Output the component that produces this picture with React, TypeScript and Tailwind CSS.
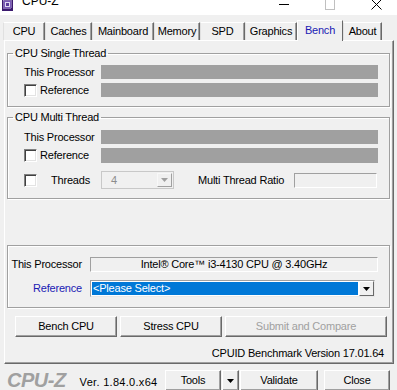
import React from "react";

function Btn({ className = "", children, disabled = false }: { className?: string; children?: React.ReactNode; disabled?: boolean }) {
  return (
    <div
      className={
        "flex items-center justify-center bg-[#f0f0f0] border border-t-white border-l-white border-b-[#696969] border-r-[#696969] shadow-[inset_-1px_-1px_0_#a0a0a0] " +
        (disabled ? "text-[#a0a0a0] " : "text-black ") +
        className
      }
    >
      {children}
    </div>
  );
}

function Check() {
  return (
    <div className="w-[13px] h-[13px] bg-white border border-t-[#808080] border-l-[#808080] border-b-white border-r-white shadow-[inset_1px_1px_0_#404040,inset_-1px_-1px_0_#e3e3e3]" />
  );
}

function Tri({ color = "#000" }: { color?: string }) {
  return (
    <svg width="7" height="4" viewBox="0 0 7 4">
      <path d="M0 0 H7 L3.5 4 Z" fill={color} />
    </svg>
  );
}

function Tab({ w, label, selected = false }: { w: number; label: string; selected?: boolean }) {
  if (selected) {
    return (
      <div
        style={{ width: w }}
        className="h-[21px] flex items-center justify-center bg-[#f0f0f0] border-t border-l border-r border-t-white border-l-white border-r-[#696969] text-[#1a1ab4] pb-[1px]"
      >
        {label}
      </div>
    );
  }
  return (
    <div
      style={{ width: w }}
      className="h-[18px] flex items-center justify-center bg-[#f0f0f0] border-t border-l border-r border-t-white border-l-[#e0e0e0] border-r-[#696969] shadow-[inset_-1px_0_0_#a0a0a0] mb-[1px]"
    >
      {label}
    </div>
  );
}

const fs = "border border-[#a0a0a0] shadow-[inset_1px_1px_0_#fff,1px_1px_0_#fff]";

export default function App() {
  return (
    <div className="w-[397px] h-[390px] overflow-hidden bg-[#f0f0f0] font-['Liberation_Sans',Arial,sans-serif] text-[11px] leading-[13px] tracking-[-0.2px] text-black select-none">
      {/* title bar */}
      <div className="h-[15px] bg-white flex items-start overflow-hidden">
        <svg className="ml-[2px] -mt-[1px]" width="11" height="12" viewBox="0 0 11 12">
          <rect x="0" y="0" width="11" height="12" fill="#3b1a6e" />
          <rect x="2" y="2" width="7" height="7" fill="#7a5ab8" />
          <rect x="3" y="3" width="5" height="5" fill="#e0d8f0" />
          <rect x="4" y="4" width="3" height="3" fill="#5a3a98" />
          <path d="M1 2h1M1 4h1M1 6h1M1 8h1M9 2h1M9 4h1M9 6h1M9 8h1M2 1v1M4 1v1M6 1v1M8 1v1M2 9v1M4 9v1M6 9v1M8 9v1" stroke="#c8b8e8" strokeWidth="1" />
        </svg>
        <span className="ml-[9px] -mt-[6px] text-[12px] leading-[15px] tracking-normal">CPU-Z</span>
        <div className="ml-auto flex -mr-[2px]">
          <div className="w-[46px] h-[15px] flex justify-center pt-[4px]">
            <div className="w-[10px] h-[1px] bg-black" />
          </div>
          <div className="w-[46px] h-[15px] flex justify-center -mt-[1px]">
            <div className="w-[10px] h-[11px] border border-[#c0c0c0]" />
          </div>
          <div className="w-[46px] h-[15px] flex justify-center -mt-[1px]">
            <svg width="11" height="11" viewBox="0 0 11 11">
              <path d="M0.5 0.5 L10.5 10.5 M10.5 0.5 L0.5 10.5" stroke="#000" strokeWidth="1" />
            </svg>
          </div>
        </div>
      </div>

      {/* tabs */}
      <div className="flex items-end h-[26px] pl-[3px] -mb-[1px] relative z-10">
        <Tab w={42} label="CPU" />
        <Tab w={47} label="Caches" />
        <Tab w={62} label="Mainboard" />
        <Tab w={46} label="Memory" />
        <Tab w={45} label="SPD" />
        <Tab w={52} label="Graphics" />
        <Tab w={46} label="Bench" selected />
        <Tab w={39} label="About" />
      </div>

      {/* panel */}
      <div className="ml-[4px] w-[390px] h-[324px] border border-t-white border-l-white border-b-[#696969] border-r-[#696969] shadow-[inset_-1px_-1px_0_#a0a0a0] flex flex-col">
        {/* single thread */}
        <fieldset className={"ml-[2px] w-[383px] mt-[6px] pb-[9px] " + fs}>
          <legend className="ml-[5px] px-[2px] leading-[13px]">CPU Single Thread</legend>
          <div className="flex items-center h-[14px] mt-[5px] pl-[16px] pr-[11px]">
            <span className="w-[77px]">This Processor</span>
            <div className="flex-1 h-[14px] bg-[#a0a0a0]" />
          </div>
          <div className="flex items-center h-[14px] mt-[4px] pl-[16px] pr-[11px]">
            <div className="w-[77px] flex items-center gap-[3px]">
              <Check />
              <span>Reference</span>
            </div>
            <div className="flex-1 h-[14px] bg-[#a0a0a0]" />
          </div>
        </fieldset>

        {/* multi thread */}
        <fieldset className={"ml-[2px] w-[383px] mt-[4px] pb-[9px] " + fs}>
          <legend className="ml-[5px] px-[2px] leading-[13px]">CPU Multi Thread</legend>
          <div className="flex items-center h-[14px] mt-[6px] pl-[16px] pr-[11px]">
            <span className="w-[77px]">This Processor</span>
            <div className="flex-1 h-[14px] bg-[#a0a0a0]" />
          </div>
          <div className="flex items-center h-[15px] mt-[4px] pl-[16px] pr-[11px]">
            <div className="w-[77px] flex items-center gap-[3px]">
              <Check />
              <span>Reference</span>
            </div>
            <div className="flex-1 h-[15px] bg-[#a0a0a0]" />
          </div>
          <div className="flex items-center h-[18px] mt-[8px] pl-[16px] pr-[12px]">
            <div className="w-[77px] flex items-center">
              <Check />
              <span className="ml-[14px]">Threads</span>
            </div>
            <div className="w-[73px] h-[18px] flex items-stretch border border-[#c8c8c8] bg-[#f0f0f0]">
              <span className="flex-1 pl-[9px] flex items-center text-[#8c8c8c]">4</span>
              <div className="w-[15px] m-[1px] flex items-center justify-center border border-t-[#f8f8f8] border-l-[#f8f8f8] border-b-[#a0a0a0] border-r-[#a0a0a0]">
                <Tri color="#a0a0a0" />
              </div>
            </div>
            <span className="ml-[24px]">Multi Thread Ratio</span>
            <div className="ml-auto w-[83px] h-[15px] border border-t-[#a0a0a0] border-l-[#a0a0a0] border-b-white border-r-white" />
          </div>
        </fieldset>

        {/* processor selection */}
        <fieldset className={"ml-[2px] w-[383px] mt-[46px] pt-[11px] pb-[10px] " + fs}>
          <div className="flex items-center h-[15px]">
            <span className="w-[74px] text-right">This Processor</span>
            <div className="ml-[8px] w-[288px] h-[15px] flex items-center justify-center border border-t-[#a0a0a0] border-l-[#a0a0a0] border-b-white border-r-white">
              Intel® Core™ i3-4130 CPU @ 3.40GHz
            </div>
          </div>
          <div className="flex items-center h-[17px] mt-[8px]">
            <span className="w-[74px] text-right text-[#1a1ab4]">Reference</span>
            <div className="ml-[8px] w-[285px] h-[17px] flex items-stretch border border-t-[#a0a0a0] border-l-[#a0a0a0] border-b-[#e8e8e8] border-r-[#e8e8e8] bg-white">
              <div className="flex-1 m-[1px] bg-[#0078d7] text-white flex items-center pl-[1px]">&lt;Please Select&gt;</div>
              <div className="w-[15px] flex items-center justify-center bg-[#f0f0f0] border border-t-white border-l-white border-b-[#696969] border-r-[#696969]">
                <Tri />
              </div>
            </div>
          </div>
        </fieldset>

        {/* buttons */}
        <div className="flex mt-[8px] pl-[10px] gap-[3px]">
          <Btn className="w-[102px] h-[21px]">Bench CPU</Btn>
          <Btn className="w-[102px] h-[21px]">Stress CPU</Btn>
          <Btn className="w-[162px] h-[21px]" disabled>
            Submit and Compare
          </Btn>
        </div>
        <div className="mt-[10px] pr-[9px] text-right leading-[13px]">CPUID Benchmark Version 17.01.64</div>
      </div>

      {/* footer */}
      <div className="flex items-start">
        <span className="ml-[7px] mt-[5px] text-[20px] leading-[22px] font-bold italic text-[#a0a0a0] tracking-[-0.5px]">CPU-Z</span>
        <span className="ml-[14px] mt-[12px] text-[11px] leading-[13px] tracking-[0.3px]">Ver. 1.84.0.x64</span>
        <div className="ml-auto flex mt-[6px] mr-[7px]">
          <Btn className="w-[56px] h-[21px]">Tools</Btn>
          <Btn className="w-[17px] h-[21px] ml-[1px]">
            <Tri />
          </Btn>
          <Btn className="w-[78px] h-[21px] ml-[1px]">Validate</Btn>
          <Btn className="w-[66px] h-[21px] ml-[6px]">Close</Btn>
        </div>
      </div>
    </div>
  );
}
